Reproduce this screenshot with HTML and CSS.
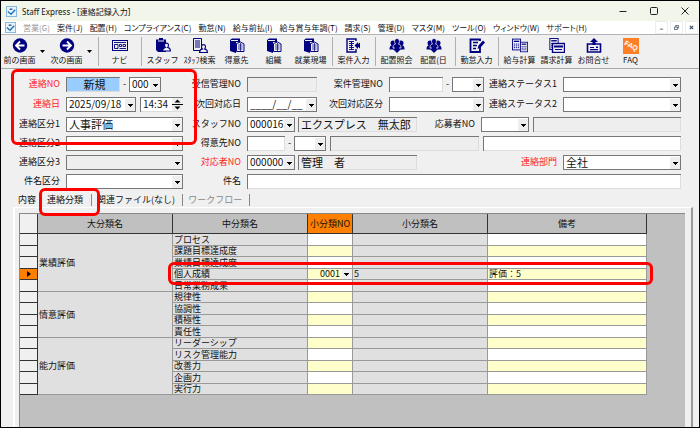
FILE: index.html
```html
<!DOCTYPE html>
<html lang="ja">
<head>
	<meta charset="UTF-8">
	<title>Staff Express - [連絡記録入力]</title>
	<link rel="stylesheet" href="styles.css">
</head>
<body>
	<svg class="defs">
		<symbol id="logo" viewBox="0 0 12 12">
			<rect x="0.5" y="0.5" width="11" height="11" fill="#e8f4fc" stroke="#7fb4dc"/>
			<path d="M2 6 L5.500 9 L10 4" fill="none" stroke="#2277bb" stroke-width="1.600"/>
			<path d="M4 3.500 H7" stroke="#334f88" stroke-width="1.500"/>
		</symbol>
		<symbol id="person" viewBox="0 0 8 8">
			<path d="M4 0.500 C6 0.500 6.300 3 5 4.300 C7 4.800 7.500 6 7.500 7.500 H0.500 C0.500 6 1 4.800 3 4.300 C1.700 3 2 0.500 4 0.500Z" fill="#f0f0f0" stroke="#000080"/>
		</symbol>
		<symbol id="book" viewBox="0 0 16 15">
			<path d="M1 2 L3 0.500 H11 V4 H7 V15 L1 13Z" fill="#000080"/>
			<path d="M2 2.500 H9" stroke="#f0f0f0"/>
			<path d="M7.500 5.500 L11.500 4 L15 6 V13.500 H7.500Z" fill="#f0f0f0" stroke="#000080"/>
			<path d="M9 7 H13.500 M9 9 H13.500 M9 11 H13.500 M11.500 5 V13" stroke="#000080" stroke-width="0.700"/>
		</symbol>
		<symbol id="group" viewBox="0 0 16 15">
			<g fill="#000080">
				<circle cx="4" cy="5" r="2.500"/><circle cx="12" cy="5" r="2.500"/>
				<path d="M0.500 11.500 C0.500 8 2 7 4 7 H12 C14 7 15.500 8 15.500 11.500Z"/>
			</g>
			<path d="M8 0.500 C11 0.500 10.800 4.500 9.500 6 C11.500 6.500 12 8 12 10 H4 C4 8 4.500 6.500 6.500 6 C5.200 4.500 5 0.500 8 0.500Z" fill="#000080" stroke="#f0f0f0" stroke-width="0.800"/>
			<path d="M6 9 H10 V11 H12 L8 15 L4 11 H6Z" fill="#000080"/>
		</symbol>
		<symbol id="calc" viewBox="0 0 10 13">
			<rect x="0.500" y="0.500" width="9" height="12" fill="#f0f0f0" stroke="#000080"/>
			<path d="M2 3 H8" stroke="#000080" stroke-width="1.500"/>
			<path d="M2 6 H8 M2 8 H8 M2 10 H8" stroke="#000080" stroke-dasharray="1.500 0.800"/>
		</symbol>
	</svg>

	<div class="window">
		<div class="titlebar">
			<svg class="logo"><use href="#logo"/></svg>
			<span class="title">Staff Express - [連絡記録入力]</span>
			<div class="winbtns">
				<button aria-label="最小化"><svg viewBox="0 0 8 8"><path d="M0.500 4.500 H7.500"/></svg></button>
				<button aria-label="最大化"><svg viewBox="0 0 8 8"><rect x="0.500" y="0.500" width="7" height="7" rx="1"/></svg></button>
				<button aria-label="閉じる"><svg viewBox="0 0 8 8"><path d="M0.500 0.500 L7.500 7.500 M7.500 0.500 L0.500 7.500"/></svg></button>
			</div>
		</div>

		<nav class="menubar">
			<svg class="logo"><use href="#logo"/></svg>
			<a href="#" class="off">営業(G)</a>
			<a href="#">案件(J)</a>
			<a href="#">配置(H)</a>
			<a href="#">コンプライアンス(C)</a>
			<a href="#">勤怠(N)</a>
			<a href="#">給与前払(I)</a>
			<a href="#">給与賞与年調(T)</a>
			<a href="#">請求(S)</a>
			<a href="#">管理(D)</a>
			<a href="#">マスタ(M)</a>
			<a href="#">ツール(O)</a>
			<a href="#">ウィンドウ(W)</a>
			<a href="#">サポート(H)</a>
			<div class="mdibtns">
				<button aria-label="子画面を最小化"><svg viewBox="0 0 6 6"><path d="M1 5 H5"/></svg></button>
				<button aria-label="子画面を元に戻す"><svg viewBox="0 0 6 6"><path d="M0.500 2.500 H4 V5.500 H0.500Z M2 2.500 V0.500 H5.500 V3.500 H4"/></svg></button>
				<button aria-label="子画面を閉じる"><svg viewBox="0 0 6 6"><path d="M1 1 L5 5 M5 1 L1 5" stroke-width="1.500"/></svg></button>
			</div>
		</nav>

		<div class="toolbar">
			<button class="tool"><svg viewBox="0 0 16 15"><circle cx="8" cy="7.500" r="7.200" fill="#000080"/><path d="M12.500 7.500 H4.500 M8 3.500 L4 7.500 L8 11.500" fill="none" stroke="#fff" stroke-width="1.800"/></svg>前の画面</button>
			<button class="drop" aria-label="前の画面の一覧"><svg viewBox="0 0 5 3"><path d="M0 0 H5 L2.500 3Z"/></svg></button>
			<button class="tool"><svg viewBox="0 0 16 15"><circle cx="8" cy="7.500" r="7.200" fill="#000080"/><path d="M3.500 7.500 H11.500 M8 3.500 L12 7.500 L8 11.500" fill="none" stroke="#fff" stroke-width="1.800"/></svg>次の画面</button>
			<button class="drop" aria-label="次の画面の一覧"><svg viewBox="0 0 5 3"><path d="M0 0 H5 L2.500 3Z"/></svg></button>
			<i class="sep"></i>
			<button class="tool"><svg viewBox="0 0 16 15"><g fill="none" stroke="#000080"><rect x="0.500" y="2.500" width="15" height="10"/><path d="M2 4.500 H14 M2.500 6.500 H6 V10.500 H2.500Z M7.500 6.500 H9.500 V8.500 H7.500Z M11 6.500 H13.500 V8.500 H11Z M7.500 10.500 H14" stroke-width="0.900"/></g></svg>ナビ</button>
			<i class="sep"></i>
			<button class="tool"><svg viewBox="0 0 16 15"><path d="M1 1.500 H4 V0 H8 V1.500 H11 V14 H3 L1 12Z" fill="#000080"/><path d="M3 3 H9" stroke="#f0f0f0"/><use href="#person" x="7" y="4" width="9" height="10"/></svg>スタッフ</button>
			<button class="tool"><svg viewBox="0 0 16 15"><path d="M1.500 0.500 H9.500 V12.500 H1.500Z" fill="#f0f0f0" stroke="#000080"/><path d="M3 3 H8 M3 5 H8 M3 7 H8 M3 9 H8" stroke="#000080"/><use href="#person" x="7" y="6" width="9" height="9"/></svg>ｽﾀｯﾌ検索</button>
			<button class="tool"><svg><use href="#book"/></svg>得意先</button>
			<button class="tool"><svg><use href="#book"/></svg>組織</button>
			<button class="tool"><svg><use href="#book"/></svg>就業現場</button>
			<i class="sep"></i>
			<button class="tool"><svg viewBox="0 0 16 15"><path d="M10 3 V1 H1 V14 H10 V11" fill="none" stroke="#000080" stroke-width="1.400"/><path d="M3 3.500 H8 M3 5.500 H8 M3 7.500 H7 M3 9.500 H8 M3 11.500 H8 M5.500 3 V12" stroke="#000080" stroke-width="0.900"/><path d="M8.500 7.500 L12 4 V6.200 L14 4.500 V10.500 L12 8.800 V11Z" fill="#000080"/></svg>案件入力</button>
			<i class="sep"></i>
			<button class="tool"><svg><use href="#group"/></svg>配置照会</button>
			<button class="tool"><svg><use href="#group"/></svg>配置(日</button>
			<i class="sep"></i>
			<button class="tool"><svg viewBox="0 0 16 15"><path d="M11 8 V14 H1.500 V1.500 H11 V3" fill="none" stroke="#000080" stroke-width="1.800"/><path d="M4 4.500 H9 M4 7.500 H8 M4 10.500 H7" stroke="#000080" stroke-width="1.400"/><path d="M8.500 11 L9.500 7.500 L14 2.500 L16 4.500 L11.500 9.500Z" fill="#000080"/></svg>勤怠入力</button>
			<i class="sep"></i>
			<button class="tool"><svg viewBox="0 0 16 15"><use href="#calc" x="0" y="0" width="9" height="13"/><use href="#calc" x="8" y="3" width="8" height="12"/></svg>給与計算</button>
			<button class="tool"><svg viewBox="0 0 16 15"><use href="#calc" x="0" y="0" width="10" height="12"/><rect x="3.500" y="5.500" width="12" height="9" fill="#f0f0f0" stroke="#000080" stroke-width="1.400"/><path d="M5 8.500 H14" stroke="#000080" stroke-width="2"/><path d="M6 11.500 H13" stroke="#000080"/></svg>請求計算</button>
			<button class="tool"><svg viewBox="0 0 16 15"><path d="M1.500 6 H14.500 V14 H1.500Z" fill="none" stroke="#000080" stroke-width="1.600"/><path d="M8 0 L12 4 H9.500 V7 H6.500 V4 H4Z M4 9 H8 V10 H4Z M4 11 H12 V12.200 H4Z M10 8.500 H12 V10 H10Z" fill="#000080"/></svg>お問合せ</button>
			<button class="tool"><svg class="faq" viewBox="0 0 16 16"><rect width="16" height="16" fill="#ff7f27"/><g transform="rotate(28 8 8)"><text x="8" y="10">FAQ</text></g></svg>FAQ</button>
		</div>

		<form class="record">
			<label class="name red" for="no">連絡NO</label>
			<div class="fields">
				<input id="no" class="box new" value="新規"><span class="dash">-</span>
				<select class="box code w-branch" aria-label="連絡NO枝番"><option>000</option></select>
			</div>
			<label class="name" for="recv">受信管理NO</label>
			<div class="fields">
				<input id="recv" class="box w-day ro" readonly>
				<label class="name w-case" for="case">案件管理NO</label>
				<input id="case" class="box w-caseno"><span class="dash">-</span>
				<select class="box w-short" aria-label="案件管理NO枝番"><option></option></select>
				<label class="name w-status" for="st1">連絡ステータス1</label>
				<select id="st1" class="box grow"><option></option></select>
			</div>

			<label class="name red" for="day">連絡日</label>
			<div class="fields between">
				<select id="day" class="box code w-day"><option>2025/09/18</option></select>
				<span class="box code time"><input aria-label="時刻" value="14:34"><svg viewBox="0 0 11 12"><path d="M0 6 H11" stroke="#000"/><path d="M5.500 1 L8.500 4 H2.500Z M5.500 11 L8.500 8 H2.500Z"/></svg></span>
			</div>
			<label class="name" for="next">次回対応日</label>
			<div class="fields">
				<select id="next" class="box code w-day"><option>____/__/__</option></select>
				<label class="name w-case" for="nextkbn">次回対応区分</label>
				<select id="nextkbn" class="box w-kbn"><option></option></select>
				<label class="name w-status" for="st2">連絡ステータス2</label>
				<select id="st2" class="box grow"><option></option></select>
			</div>

			<label class="name" for="kbn1">連絡区分1</label>
			<div class="fields"><select id="kbn1" class="box grow"><option>人事評価</option></select></div>
			<label class="name" for="staff">スタッフNO</label>
			<div class="fields">
				<select id="staff" class="box code w-code"><option>000016</option></select>
				<input class="box ro w-person" aria-label="スタッフ名" value="エクスプレス　無太郎" readonly>
				<label class="name w-entry" for="entry">応募者NO</label>
				<select id="entry" class="box w-code"><option></option></select>
				<input class="box ro grow next" aria-label="応募者名" readonly>
			</div>

			<label class="name" for="kbn2">連絡区分2</label>
			<div class="fields"><select id="kbn2" class="box grow"><option></option></select></div>
			<label class="name" for="client">得意先NO</label>
			<div class="fields">
				<input id="client" class="box w-client"><span class="dash">-</span>
				<select class="box w-short" aria-label="得意先NO枝番"><option></option></select>
				<input class="box ro w-clientname next" aria-label="得意先名" readonly>
				<input class="box grow next" aria-label="得意先担当">
			</div>

			<label class="name" for="kbn3">連絡区分3</label>
			<div class="fields"><select id="kbn3" class="box grow ro"><option></option></select></div>
			<label class="name red" for="owner">対応者NO</label>
			<div class="fields">
				<select id="owner" class="box code w-code"><option>000000</option></select>
				<input class="box ro w-person" aria-label="対応者名" value="管理　者" readonly>
				<label class="name w-dept red" for="dept">連絡部門</label>
				<select id="dept" class="box grow"><option>全社</option></select>
			</div>

			<label class="name" for="subkbn">件名区分</label>
			<div class="fields"><select id="subkbn" class="box grow"><option></option></select></div>
			<label class="name" for="subject">件名</label>
			<div class="fields"><input id="subject" class="box grow"></div>

			<div class="mark mark-form"></div>
		</form>

		<div class="tabs">
			<button class="tab">内容</button>
			<button class="tab on">連絡分類<span class="mark mark-tab"></span></button>
			<button class="tab">関連ファイル(なし)</button>
			<button class="tab off">ワークフロー</button>
		</div>

		<div class="page">
			<div class="sheet">
				<table>
					<colgroup><col class="c-mark"><col class="c-name"><col class="c-name"><col class="c-no"><col class="c-name"><col></colgroup>
					<thead>
						<tr><th></th><th>大分類名</th><th>中分類名</th><th class="cur">小分類NO</th><th>小分類名</th><th>備考</th></tr>
					</thead>
					<tbody>
						<tr><th></th><td class="g" rowspan="5">業績評価</td><td class="g">プロセス</td><td></td><td class="g"></td><td></td></tr>
						<tr><th></th><td class="g">課題目標達成度</td><td></td><td class="g"></td><td></td></tr>
						<tr><th></th><td class="g">業績目標達成度</td><td></td><td class="g"></td><td></td></tr>
						<tr><th class="cur"><svg viewBox="0 0 4 6"><path d="M0 0 L4 3 L0 6Z"/></svg></th><td class="g">個人成績</td><td><select class="cell" aria-label="小分類NO"><option>0001</option></select></td><td class="g">5</td><td>評価：5</td></tr>
						<tr><th></th><td class="g">日常業務成果</td><td></td><td class="g"></td><td></td></tr>
						<tr><th></th><td class="g" rowspan="4">情意評価</td><td class="g">規律性</td><td></td><td class="g"></td><td></td></tr>
						<tr><th></th><td class="g">協調性</td><td></td><td class="g"></td><td></td></tr>
						<tr><th></th><td class="g">積極性</td><td></td><td class="g"></td><td></td></tr>
						<tr><th></th><td class="g">責任性</td><td></td><td class="g"></td><td></td></tr>
						<tr><th></th><td class="g" rowspan="5">能力評価</td><td class="g">リーダーシップ</td><td></td><td class="g"></td><td></td></tr>
						<tr><th></th><td class="g">リスク管理能力</td><td></td><td class="g"></td><td></td></tr>
						<tr><th></th><td class="g">改善力</td><td></td><td class="g"></td><td></td></tr>
						<tr><th></th><td class="g">企画力</td><td></td><td class="g"></td><td></td></tr>
						<tr><th></th><td class="g">実行力</td><td></td><td class="g"></td><td></td></tr>
					</tbody>
				</table>
				<div class="mark mark-row"></div>
			</div>
		</div>
	</div>
</body>
</html>
```
FILE: styles.css
```css
*{
	margin: 0;
	padding: 0;
	box-sizing: border-box;
}
body{
	font-family: "Noto Sans CJK JP", sans-serif;
	font-size: 9px;
	line-height: 11px;
	color: #111;
	background: #f0f0f0;
}
button, input, select{
	font: inherit;
	color: inherit;
	border: 0;
	border-radius: 0;
	background: none;
	appearance: none;
	min-width: 0;
}
.defs{
	position: absolute;
	width: 0;
	height: 0;
}
.window{
	min-height: 100vh;
	display: flex;
	flex-direction: column;
	border: 1px solid #000;
}

/* title and menu */
.titlebar{
	display: flex;
	align-items: center;
	height: 20px;
	padding: 0 10px 0 5px;
	background: #f2f5ea;
}
.logo{
	flex: none;
	width: 11px;
	height: 11px;
}
.title{
	margin-left: 5px;
	font-family: "Noto Sans", "Noto Sans CJK JP", sans-serif;
	font-size: 8px;
}
.winbtns{
	display: flex;
	gap: 23px;
	margin-left: auto;
}
.winbtns svg, .mdibtns svg{
	display: block;
	width: 8px;
	height: 8px;
	fill: none;
	stroke: #222;
}
.menubar{
	display: flex;
	align-items: center;
	gap: 7px;
	height: 14px;
	padding: 0 1px 0 4px;
	background: #fff;
	border-bottom: 1px solid #b4b4b4;
	font-size: 8px;
	white-space: nowrap;
	font-feature-settings: "palt";
}
.menubar a{
	color: #111;
	text-decoration: none;
}
.menubar .off{
	color: #999;
}
.mdibtns{
	display: flex;
	gap: 2px;
	margin-left: auto;
}
.mdibtns button{
	padding: 3px;
	border: 1px solid #eee;
}
.mdibtns svg{
	width: 5px;
	height: 5px;
	stroke: #456;
}

/* toolbar */
.toolbar{
	display: flex;
	align-items: stretch;
	height: 34px;
	padding: 2px 0;
	border-bottom: 1px solid #a8a8a8;
	font-size: 8px;
	white-space: nowrap;
}
.tool{
	display: flex;
	flex-direction: column;
	align-items: center;
	justify-content: space-between;
	width: 37px;
	padding-top: 1px;
	line-height: 12px;
}
.tool svg{
	width: 16px;
	height: 15px;
}
.tool .faq{
	height: 16px;
}
.faq text{
	fill: #fff;
	font: bold 7px "Liberation Sans", sans-serif;
	text-anchor: middle;
}
.drop{
	width: 10px;
}
.drop svg{
	display: block;
	width: 5px;
	height: 3px;
	margin-left: 2px;
}
.sep{
	width: 1px;
	margin: 0 2px 0 3px;
	background: #b0b0b0;
}

/* record form */
.record{
	position: relative;
	display: grid;
	grid-template-columns: 59px 117px 52px 1fr;
	grid-template-rows: 20px 20px repeat(4, 19px);
	column-gap: 6px;
	padding: 8px 18px 0 0;
}
.name{
	flex: none;
	line-height: 14px;
	text-align: right;
	white-space: nowrap;
	justify-self: end;
}
.fields .name{
	padding-right: 6px;
}
.red{
	color: #f22;
}
.fields{
	display: flex;
	height: 15px;
}
.between{
	justify-content: space-between;
}
.box{
	flex: none;
	height: 15px;
	padding: 0 0 2px 2px;
	border: solid #777;
	border-width: 1px 0 0 1px;
	box-shadow: inset -1px -1px #ddd;
	background-color: #fff;
	font-size: 11px;
	line-height: 12px;
}
.code{
	font-size: 10px;
}
select.box, .cell{
	background-image: linear-gradient(#000, #000), linear-gradient(#000, #000), linear-gradient(#000, #000), linear-gradient(#eee, #eee);
	background-repeat: no-repeat;
	background-position: right 3px top 6px, right 4px top 7px, right 5px top 8px, right 1px top 1px;
	background-size: 5px 1px, 3px 1px, 1px 1px, 10px 12px;
	box-shadow: inset -1px -1px #777;
}
.ro{
	background-color: #eee;
}
.grow{
	flex: 1;
}
.next{
	margin-left: 4px;
}
.new{
	width: 54px;
	background: #99ccff;
	text-align: center;
}
.dash{
	width: 9px;
	text-align: center;
	line-height: 14px;
}
.w-branch, .w-short{
	width: 32px;
}
.w-day{
	width: 70px;
}
.w-case{
	width: 72px;
}
.w-caseno{
	width: 54px;
}
.w-kbn{
	width: 95px;
}
.w-status{
	width: 79px;
}
.w-code{
	width: 48px;
}
.w-person{
	width: 119px;
	margin-left: 3px;
}
.w-entry{
	width: 64px;
}
.w-client{
	width: 38px;
}
.w-clientname{
	width: 149px;
}
.w-dept{
	width: 146px;
}
.time{
	display: flex;
	width: 43px;
}
.time input{
	width: 29px;
}
.time svg{
	width: 11px;
	height: 13px;
	background: #eee;
}

/* tabs */
.tabs{
	display: flex;
	padding: 1px 0 0 7px;
}
.tab{
	position: relative;
	padding: 0 7px 0 5px;
	line-height: 12px;
	border-right: 1px solid #888;
}
.tab:first-child{
	padding: 0 9px 0 10px;
	border: 0;
}
.tab.on{
	padding: 0 8px 0 2px;
}
.tab.off{
	color: #888;
}
.page{
	flex: 1;
	display: flex;
	margin: 1px 6px 0 12px;
	padding: 5px 6px 0 4px;
	border: solid #fff;
	border-width: 1px 2px 0 2px;
	border-right-color: #999;
}
.sheet{
	position: relative;
	flex: 1;
	padding-right: 38px;
	background: #c0c0c0;
	border: solid #888;
	border-width: 1px 0 0 1px;
}
table{
	width: 100%;
	table-layout: fixed;
	border-collapse: separate;
	border-spacing: 0;
}
.c-mark{
	width: 18px;
}
.c-name{
	width: 135px;
}
.c-no{
	width: 45px;
}
th, td{
	height: 11px;
	line-height: 10px;
	font-weight: normal;
	border: solid #999;
	border-width: 0 1px 1px 0;
	white-space: nowrap;
}
tr:nth-child(odd) > *{
	height: 12px;
}
thead th, thead tr:nth-child(odd) > *{
	height: 20px;
	background: #c0c0c0;
	border-color: #333;
}
tbody th{
	background: #f0f0f0;
	border-color: #333;
}
thead tr:nth-child(odd) > th:first-child{
	background: #f0f0f0;
}
tbody .cur, thead tr:nth-child(odd) > .cur{
	background: #ff8000;
}
.cur svg{
	display: block;
	width: 4px;
	height: 6px;
	margin: 0 auto;
}
td{
	padding-left: 1px;
	background: #fff;
}
tr:nth-child(even) td{
	background: #ffffcc;
}
td.g, tr:nth-child(even) td.g{
	background: #e0e0e0;
}
.cell{
	display: block;
	width: 100%;
	height: 10px;
	padding-left: 11px;
	line-height: 10px;
	background-position: right 3px top 4px, right 4px top 5px, right 5px top 6px, right 0 top 0;
	box-shadow: none;
}

/* red call-outs */
.mark{
	position: absolute;
	border: 3px solid #f00;
	border-radius: 6px;
	pointer-events: none;
}
.mark-form{
	left: 10px;
	top: 0;
	width: 186px;
	height: 76px;
}
.mark-tab{
	left: -6px;
	right: -9px;
	top: -6px;
	height: 28px;
	z-index: 1;
}
.mark-row{
	left: 148px;
	right: 32px;
	top: 48px;
	height: 23px;
}
```
